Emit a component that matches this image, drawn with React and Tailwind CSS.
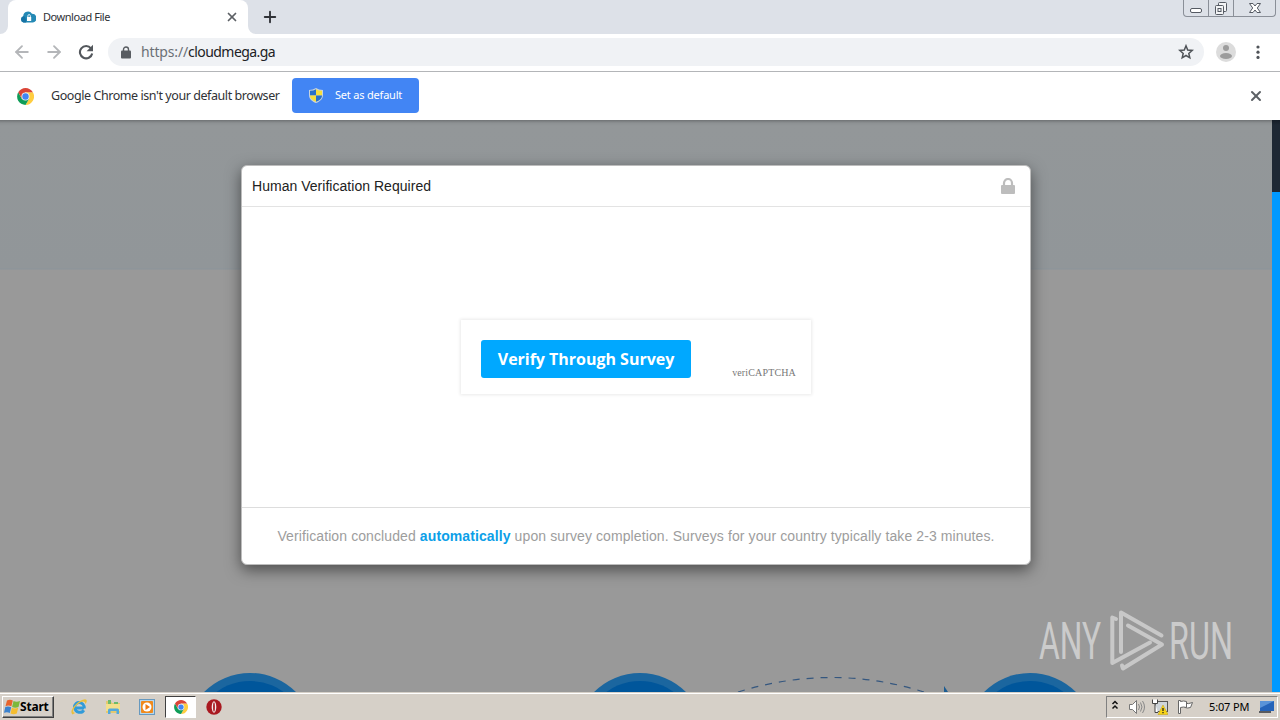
import { X, Plus, ArrowLeft, ArrowRight } from 'lucide-react'

const tahoma = 'font-["Noto_Sans",sans-serif]'

function ChromeIcon({ className }) {
  return (
    <svg viewBox="0 0 48 48" className={className}>
      <path d="M24 12h20.8A24 24 0 0 1 24 48L34.4 30z" fill="#ffcd40" />
      <path d="M34.4 30 24 48A24 24 0 0 1 3.5 12L13.6 30z" fill="#0f9d58" />
      <path d="M3.5 12A24 24 0 0 1 44.8 12H24L13.6 30z" fill="#db4437" />
      <circle cx="24" cy="24" r="11.5" fill="#f1f1f1" />
      <circle cx="24" cy="24" r="9" fill="#4285f4" />
    </svg>
  )
}

function CloudIcon() {
  return (
    <svg viewBox="0 0 16 12" className="w-4 h-3">
      <path d="M3.5 11.5a3.3 3.3 0 0 1-.3-6.3A4.8 4.8 0 0 1 12 2.8a4.4 4.4 0 0 1 1 8.7z" fill="#2489b5" />
      <path d="M3.5 11.5a3.3 3.3 0 0 1-.3-6.3c1.5 0 3 1.5 3 6.3z" fill="#1673a4" />
      <path d="M7 6h4.2v4H7z" fill="#fff" />
      <path d="M7.9 6V4.8a1.2 1.2 0 0 1 2.4 0V6" fill="none" stroke="#fff" strokeWidth=".9" />
    </svg>
  )
}

function ShieldIcon() {
  return (
    <svg viewBox="0 0 14 15" className="w-3.5 h-[15px]">
      <path d="M7 0Q10 2 14 2v5c0 4-3 6.5-7 8-4-1.5-7-4-7-8V2Q4 2 7 0z" fill="#c7d3de" />
      <path d="M7 1.2V7.5H1V2.8Q4.5 2.8 7 1.2z" fill="#2a71c8" />
      <path d="M7 1.2Q9.5 2.8 13 2.8v4.7H7z" fill="#f7df3c" />
      <path d="M1 7.5h6v6.3C3.5 12.5 1 10.5 1 7.5z" fill="#f7df3c" />
      <path d="M13 7.5H7v6.3c3.5-1.3 6-3.3 6-6.3z" fill="#2a71c8" />
    </svg>
  )
}

function TabStrip() {
  return (
    <div className="h-[34px] shrink-0 bg-[#dde1e8] flex items-start">
      <svg viewBox="0 0 8 8" className="w-2 h-2 self-end"><path d="M8 0v8H0a8 8 0 0 0 8-8z" fill="#fff" /></svg>
      <div className="w-[240px] h-[34px] bg-white rounded-t-lg flex items-center pl-3 pr-[9px]">
        <CloudIcon />
        <span className={`${tahoma} text-[11px] tracking-[-0.45px] text-[#2f3236] ml-[7px] flex-1`}>Download File</span>
        <X className="w-3.5 h-3.5 text-[#5c6065]" strokeWidth={3} />
      </div>
      <svg viewBox="0 0 8 8" className="w-2 h-2 self-end"><path d="M0 0v8h8a8 8 0 0 1-8-8z" fill="#fff" /></svg>
      <Plus className="w-[18px] h-[18px] ml-[5px] mt-2 text-[#303338]" strokeWidth={2.5} />
      <div className="ml-auto mr-1 w-[93px] h-[17px] border border-t-0 border-[#8a8f98] rounded-b flex">
        <div className="w-[25px] border-r border-[#8a8f98] flex justify-center">
          <svg viewBox="0 0 14 16" className="w-3.5 h-4"><rect x="1.5" y="8.5" width="11" height="4" rx="1.5" fill="#fff" stroke="#555a63" /></svg>
        </div>
        <div className="w-[25px] border-r border-[#8a8f98] flex justify-center">
          <svg viewBox="0 0 14 16" className="w-3.5 h-4" fill="#f3f4f6" stroke="#555a63">
            <rect x="4.5" y="2.5" width="8" height="9" rx="1" />
            <rect x="1.5" y="5.5" width="8" height="9" rx="1" />
            <rect x="4" y="8.5" width="3" height="3" />
          </svg>
        </div>
        <div className="flex-1 flex justify-center">
          <svg viewBox="0 0 14 16" className="w-3.5 h-4">
            <path d="M1.5 3.500h3.500l2 2.500 2-2.500h3.500L9.300 8l3.200 4.500H9L7 10l-2 2.500H1.500L4.700 8z" fill="#fff" stroke="#555a63" />
          </svg>
        </div>
      </div>
    </div>
  )
}

function Toolbar() {
  return (
    <div className="h-[38px] shrink-0 bg-white border-b border-[#b3b5b8] flex items-center pb-px">
      <ArrowLeft className="w-5 h-5 ml-3 text-[#b4b6b9]" strokeWidth={2.2} />
      <ArrowRight className="w-5 h-5 ml-3 text-[#b4b6b9]" strokeWidth={2.2} />
      <svg viewBox="0 0 16 16" className="w-4 h-4 ml-3.5">
        <path d="M13 4.3A6.2 6.2 0 1 0 14.2 9.5" fill="none" stroke="#53575c" strokeWidth="2.1" />
        <path d="M15 .8v6.4H8.6z" fill="#53575c" />
      </svg>
      <div className="ml-3.5 w-[1096px] h-7 rounded-full bg-[#f0f2f5] flex items-center pl-[13px] pr-[10px]">
        <svg viewBox="0 0 10 13" className="w-2.5 h-[13px]">
          <rect x="0" y="4.5" width="10" height="8" rx="1" fill="#585c61" />
          <path d="M2.5 5V3.5a2.5 2.5 0 0 1 5 0V5" fill="none" stroke="#585c61" strokeWidth="1.4" />
        </svg>
        <span className={`${tahoma} text-sm text-[#202124] ml-2.5 flex-1`}>
          <span className="text-[#6b7076] tracking-[-0.15px]">https://</span><span className="tracking-[-0.55px]">cloudmega.ga</span>
        </span>
        <svg viewBox="0 0 16 16" className="w-4 h-4">
          <path d="M8 1.8 9.7 6l4.500.4-3.400 3 1 4.400L8 11.500l-3.800 2.300 1-4.400-3.400-3L6.300 6z" fill="none" stroke="#4f5358" strokeWidth="1.5" />
        </svg>
      </div>
      <svg viewBox="0 0 20 20" className="w-5 h-5 ml-3">
        <circle cx="10" cy="10" r="10" fill="#dcdcdc" />
        <circle cx="10" cy="6" r="3" fill="#9c9c9c" />
        <ellipse cx="10" cy="14" rx="6" ry="3" fill="#9c9c9c" />
      </svg>
      <svg viewBox="0 0 4 16" className="w-1 h-4 ml-5" fill="#505459">
        <circle cx="2" cy="3" r="1.6" />
        <circle cx="2" cy="8.2" r="1.6" />
        <circle cx="2" cy="13.4" r="1.6" />
      </svg>
    </div>
  )
}

function InfoBar() {
  return (
    <div className={`${tahoma} h-12 shrink-0 bg-white flex items-center pl-[17px] pr-4`}>
      <ChromeIcon className="w-[17px] h-[17px]" />
      <span className="text-[12.5px] text-[#303236] ml-[17px] w-[241px] whitespace-nowrap tracking-[-0.43px]">Google Chrome isn't your default browser</span>
      <button className="w-[127px] h-[35px] mb-0.5 bg-[#4285f4] rounded flex items-center pl-[17px] text-white text-[11px]">
        <ShieldIcon />
        <span className="ml-3 whitespace-nowrap tracking-[-0.2px]">Set as default</span>
      </button>
      <X className="w-4 h-4 ml-auto text-[#5c6065]" strokeWidth={3} />
    </div>
  )
}

function Modal() {
  return (
    <div className='w-[790px] h-[400px] mt-[45px] ml-[241px] bg-white border border-[#bdbdbd] rounded-md shadow-[0_5px_15px_rgba(0,0,0,0.5)] flex flex-col font-["Liberation_Sans",Arial,sans-serif] text-sm relative'>
      <div className="h-[41px] border-b border-[#e3e3e3] flex items-center justify-between pl-2.5 pr-[15px] text-[#222]">
        <span className="tracking-[0.03px]">Human Verification Required</span>
        <svg viewBox="0 0 14 16" className="w-3.5 h-4">
          <rect y="7" width="14" height="9" rx="1" fill="#bdbdbd" />
          <path d="M3 8V5a4 4 0 0 1 8 0v3" fill="none" stroke="#bdbdbd" strokeWidth="2.2" />
        </svg>
      </div>
      <div className="flex-1 flex items-center justify-center">
        <div className="w-[350px] h-[74px] shadow-[0_0_3px_1px_#ebebeb] flex items-center pl-5 pr-[15px] justify-between">
          <button className='w-[210px] h-[38px] mt-1 rounded-[3px] bg-[#00a8ff] text-white font-bold text-base tracking-[-0.02px] whitespace-nowrap font-["Open_Sans",sans-serif]'>Verify Through Survey</button>
          <span className='font-["Liberation_Serif",serif] text-[10px] text-[#777] mt-[33px] tracking-[0.15px]'>veriCAPTCHA</span>
        </div>
      </div>
      <div className="h-[57px] border-t border-[#ddd] flex items-center justify-center text-[#9d9d9d] whitespace-pre tracking-[0.1px]">
        <span>Verification concluded <b className="text-[#0c9fe8]">automatically</b> upon survey completion. Surveys for your country typically take 2-3 minutes.</span>
      </div>
    </div>
  )
}

function Watermark() {
  return (
    <svg viewBox="0 0 245 70" className="absolute left-[1035px] top-[486px] w-[245px] h-[70px]">
      <g fill="#cbcbcb" className='font-["Roboto",sans-serif]' fontSize="52">
        <text x="4" y="53" textLength="62" lengthAdjust="spacingAndGlyphs">ANY</text>
        <text x="134" y="53" textLength="64" lengthAdjust="spacingAndGlyphs">RUN</text>
      </g>
      <g fill="none" stroke="#c8c8c8" strokeWidth="4" strokeLinejoin="round" strokeLinecap="round">
        <path d="M81 13 77.3 11.5V57L115 36.5" />
        <path d="M86 46V6.5L126.5 29.5" />
        <path d="M93 19.5 127 38.5 88 62.5 87 59.5" />
      </g>
    </svg>
  )
}

function PageArt() {
  return (
    <svg viewBox="0 0 1272 572" className="absolute left-0 top-0 w-[1272px] h-[572px]">
      {[250, 640, 1030].map((x) => (
        <g key={x}>
          <circle cx={x} cy="618" r="65" fill="#1b669f" />
          <circle cx={x} cy="618" r="57" fill="#00569b" />
        </g>
      ))}
      <path d="M738 572Q832 543 924 572" fill="none" stroke="#35577f" strokeWidth="1.2" strokeDasharray="7 7" />
      <path d="M944 566l4 6h-4z" fill="#1b5c92" />
    </svg>
  )
}

function WindowsFlag() {
  return (
    <svg viewBox="0 0 16 16" className="w-4 h-4 shrink-0">
      <path d="M3 1.5Q6-.2 8.8 1.5L7.4 7.3Q4.5 5.7 1.5 7.2z" fill="#e8642c" />
      <path d="M9.5 2Q12.5 3.5 16 2l-1.5 6Q11.3 9.5 8.1 8z" fill="#7cb83c" />
      <path d="M1.3 8Q4 6.7 7.2 8.2L5.8 13.9Q3 12.5 0 13.8z" fill="#3c82ce" />
      <path d="M7.9 8.8Q11 10.2 14.2 8.8l-1.4 5.7Q9.5 16 6.5 14.5z" fill="#f5bd30" />
    </svg>
  )
}

function Taskbar() {
  return (
    <div className={`${tahoma} h-7 shrink-0 bg-[#d6d0c8] border-t border-[#d6d0c8] shadow-[inset_0_1px_0_#fff] flex items-center pl-0.5 pt-px`}>
      <button className="w-[52px] h-[22px] border border-t-white border-l-white border-r-[#404040] border-b-[#404040] shadow-[inset_-1px_-1px_0_#808080] flex items-center pl-px text-black">
        <WindowsFlag />
        <span className="font-bold text-xs tracking-[-0.2px]">Start</span>
      </button>
      <svg viewBox="0 0 18 18" className="w-[18px] h-[18px] ml-4">
        <path d="M14 10H5c.2 5 7 5.5 8.7 2.3M4.5 9.5c0-7 10-6.5 9.8 1" fill="none" stroke="#319bd9" strokeWidth="3" />
        <path d="M2.5 16.5C-2 13 8 2 15 1.3c3 0 1.5 4 .3 4.5 0-3-3-3.3-7.3.2C3 10.5 1.5 15.5 5.5 14.7z" fill="#e9bf3d" />
      </svg>
      <svg viewBox="0 0 18 16" className="w-[18px] h-4 ml-4">
        <path d="M2 2h5l1 2h8v10H2z" fill="#e5c96f" />
        <path d="M4 1h3v4H4zM10 3h4v2h-4z" fill="#6dbb6b" />
        <path d="M2 5h14v7H2z" fill="#f3e08c" />
        <path d="M4 15v-4q0-1.5 1.5-1.5h8Q15 9.5 15 11v4h-2.500v-3h-6v3z" fill="#53a9dc" />
      </svg>
      <svg viewBox="0 0 16 16" className="w-4 h-4 ml-[17px]">
        <rect x=".5" y=".5" width="15" height="15" fill="#b5d7ef" stroke="#6799bf" />
        <rect x="2" y="2" width="12" height="12" rx="1" fill="#f08a1d" />
        <circle cx="8" cy="8" r="4.5" fill="#fff" />
        <path d="M6.500 5v6L11 8z" fill="#ee7b13" />
      </svg>
      <div className="w-[31px] h-[22px] ml-2.5 bg-white border border-t-[#404040] border-l-[#404040] border-r-white border-b-white flex items-center justify-center">
        <ChromeIcon className="w-3.5 h-3.5" />
      </div>
      <svg viewBox="0 0 16 16" className="w-4 h-4 ml-[10px]">
        <circle cx="8" cy="8" r="7.7" fill="#a91920" />
        <ellipse cx="8" cy="8" rx="2.3" ry="5.7" fill="#f5eded" />
        <ellipse cx="8" cy="8" rx=".9" ry="4.7" fill="#a91920" />
      </svg>
      <div className="ml-auto mr-0.5 w-[172px] h-[22px] border border-t-[#808080] border-l-[#808080] border-r-white border-b-white flex items-center text-black pl-1">
        <svg viewBox="0 0 8 10" className="w-2 h-2.5 mb-1" fill="none" stroke="#111" strokeWidth="1.5">
          <path d="M1.5 4l2.5-2.500L6.500 4M1.500 8.500l2.500-2.500 2.500 2.500" />
        </svg>
        <svg viewBox="0 0 17 16" className="w-[17px] h-4 ml-[9px]">
          <path d="M1.5 5.500h3l4-4v13l-4-4h-3z" fill="#fff" stroke="#777" />
          <path d="M10.5 5q2 3 0 6M12.5 3.500q3 4.500 0 9M14.500 2q4 6 0 12" fill="none" stroke="#888" />
        </svg>
        <svg viewBox="0 0 16 16" className="w-4 h-4 ml-[7px]">
          <rect x="3.5" y="2.5" width="12" height="10" fill="#cfd5da" stroke="#555" />
          <path d="M.5.500v4h5v-4M3 4.500v9h3" fill="#fff" stroke="#444" />
          <path d="M11 6l5 9.500H6z" fill="#f7d417" stroke="#c29f0a" strokeWidth=".5" />
          <path d="M11 9v3M11 13v1.300" stroke="#222" strokeWidth="1.3" />
        </svg>
        <svg viewBox="0 0 16 16" className="w-4 h-4 ml-[9px]" fill="#fff" stroke="#666">
          <path d="M8 4q3 1.500 7.500-.5l-2 5q-3 1-5.500 0z" />
          <path d="M1.500 1.500h2v1q3-1 6 0v6q-3-1-6 0v6h-2z" />
        </svg>
        <span className="ml-4 text-[11px] whitespace-nowrap tracking-[-0.15px]">5:07 PM</span>
        <svg viewBox="0 0 16 14" className="w-4 h-3.5 ml-auto mr-[2px]">
          <path d="M1 1h14v10H1z" fill="#2563b9" />
          <path d="M1 1h14L1 8z" fill="#5a93d8" />
          <path d="M0 12h12" stroke="#30343c" strokeWidth="1.5" />
        </svg>
      </div>
    </div>
  )
}

export default function App() {
  return (
    <div className="w-[1280px] h-[720px] overflow-hidden flex flex-col bg-[#999]">
      <TabStrip />
      <Toolbar />
      <InfoBar />
      <div className="flex-1 min-h-0 flex relative overflow-hidden">
        <div className="flex-1 bg-[linear-gradient(#6f7274_0,#8d9193_3px,#939799_6px,#919699_148px,#8b949b_149px,#999_150px)]">
          <PageArt />
          <Modal />
        </div>
        <div className="w-2 flex flex-col">
          <div className="h-[72px] bg-[linear-gradient(#151d27_0,#1e2834_5px)]" />
          <div className="flex-1 bg-[#0099ff]" />
        </div>
        <Watermark />
      </div>
      <Taskbar />
    </div>
  )
}
